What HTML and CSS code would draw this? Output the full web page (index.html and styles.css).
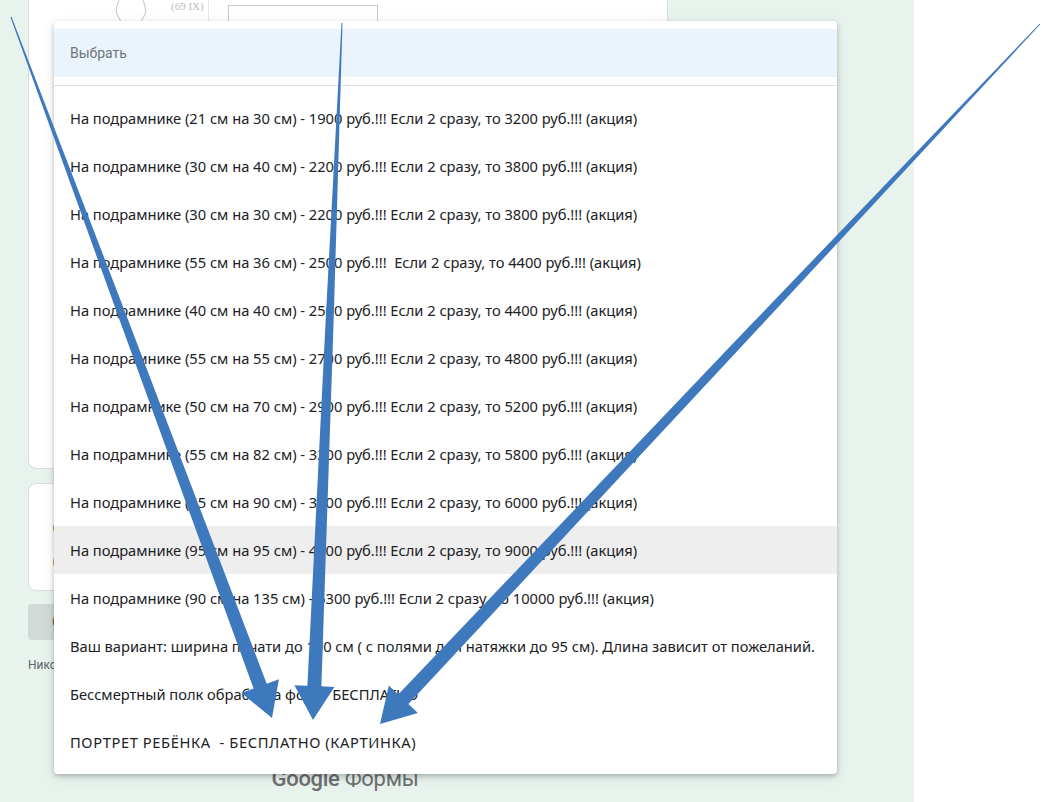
FILE: index.html
```html
<!DOCTYPE html>
<html lang="ru">
<head>
    <meta charset="UTF-8">
    <meta name="viewport" content="width=device-width, initial-scale=1.0">
    <title>Заказ портрета</title>
    <link rel="stylesheet" href="styles.css">
</head>
<body>
    <div class="page">
        <div class="form">
            <div class="card card-top">
                <div class="table-row">
                    <div class="cell cell-pic">
                        <svg class="sketch" width="40" height="22" viewBox="0 0 40 22">
                            <path d="M8 0 C6 6 4 10 6 14 C7 17 9 19 10 22 M32 0 C34 6 36 10 34 14 C33 17 31 19 30 22" fill="none" stroke="#cfcfcf" stroke-width="1.2"/>
                        </svg>
                        <span class="pic-label">(69 IX)</span>
                    </div>
                    <div class="cell cell-input">
                        <div class="fake-input"></div>
                    </div>
                </div>
            </div>

            <div class="card card-options">
                <div class="radio"></div>
                <div class="radio"></div>
            </div>

            <div class="actions">
                <button class="submit">Отправить</button>
            </div>

            <p class="notice">Никогда не используйте Google Формы для передачи паролей.</p>

            <div class="brand"><b>Google</b> Формы</div>
        </div>
    </div>

    <div class="dropdown">
        <div class="dropdown-head">Выбрать</div>
        <div class="dropdown-sep"></div>
        <div class="option">На подрамнике (21 см на 30 см) - 1900 руб.!!! Если 2 сразу, то 3200 руб.!!! (акция)</div>
        <div class="option">На подрамнике (30 см на 40 см) - 2200 руб.!!! Если 2 сразу, то 3800 руб.!!! (акция)</div>
        <div class="option">На подрамнике (30 см на 30 см) - 2200 руб.!!! Если 2 сразу, то 3800 руб.!!! (акция)</div>
        <div class="option">На подрамнике (55 см на 36 см) - 2500 руб.!!!&nbsp; Если 2 сразу, то 4400 руб.!!! (акция)</div>
        <div class="option">На подрамнике (40 см на 40 см) - 2500 руб.!!! Если 2 сразу, то 4400 руб.!!! (акция)</div>
        <div class="option">На подрамнике (55 см на 55 см) - 2700 руб.!!! Если 2 сразу, то 4800 руб.!!! (акция)</div>
        <div class="option">На подрамнике (50 см на 70 см) - 2900 руб.!!! Если 2 сразу, то 5200 руб.!!! (акция)</div>
        <div class="option">На подрамнике (55 см на 82 см) - 3200 руб.!!! Если 2 сразу, то 5800 руб.!!! (акция)</div>
        <div class="option">На подрамнике (65 см на 90 см) - 3300 руб.!!! Если 2 сразу, то 6000 руб.!!! (акция)</div>
        <div class="option hover">На подрамнике (95 см на 95 см) - 4800 руб.!!! Если 2 сразу, то 9000 руб.!!! (акция)</div>
        <div class="option">На подрамнике (90 см на 135 см) - 5300 руб.!!! Если 2 сразу, то 10000 руб.!!! (акция)</div>
        <div class="option">Ваш вариант: ширина печати до 100 см ( с полями для натяжки до 95 см). Длина зависит от пожеланий.</div>
        <div class="option">Бессмертный полк обработка фото - БЕСПЛАТНО</div>
        <div class="option caps">ПОРТРЕТ РЕБЁНКА&nbsp; - БЕСПЛАТНО (КАРТИНКА)</div>
    </div>

    <!-- arrows drawn on top of the screenshot -->
    <svg class="arrows" width="1042" height="802" viewBox="0 0 1042 802">
        <polygon points="11.5,16.8 126.9,316.7 266.7,683.7 278.9,679.2 272,718 241.4,693.1 253.6,688.6 119.4,319.5 10.5,17.2"/>
        <polygon points="342.5,23 333.6,321.5 321.4,686.3 334.4,686.9 313,720 294.4,685.2 307.4,685.7 325.6,321.2 341.5,23"/>
        <polygon points="1040.4,24.3 756.4,330.6 408.4,704.1 417.9,713 380,724 388.8,685.5 398.2,694.5 750.6,325.1 1039.6,23.7"/>
    </svg>
</body>
</html>
```

FILE: styles.css
```css
body {
    margin: 0;
    background: #fff;
    font-family: Roboto, Arial, sans-serif;
    overflow: hidden;
}
.page {
    width: 914px;
    height: 802px;
    background: #e8f3ee;
}
.form {
    margin-left: 28px;
    width: 640px;
}
.card {
    background: #fff;
    border: 1px solid #dadce0;
    border-radius: 8px;
    box-sizing: border-box;
}
.card-top {
    height: 469px;
    border-top: none;
    border-radius: 0 0 8px 8px;
}
.table-row {
    display: flex;
    height: 62px;
}
.cell {
    box-sizing: border-box;
}
.cell-pic {
    width: 180px;
    border-right: 1px solid #e6e6e6;
    display: flex;
    padding-left: 82px;
    gap: 20px;
}
.pic-label {
    font-family: "Liberation Serif", serif;
    font-size: 11px;
    line-height: 12px;
    color: #bdbdbd;
}
.cell-input {
    padding: 5px 0 0 19px;
}
.fake-input {
    width: 148px;
    height: 40px;
    border: 1px solid #c8c8c8;
}
.card-options {
    margin-top: 14px;
    height: 108px;
    padding: 34px 0 0 24px;
    display: flex;
    flex-direction: column;
    gap: 14px;
}
.radio {
    width: 16px;
    height: 16px;
    border: 2px solid #c9822b;
    border-radius: 50%;
}
.actions {
    margin-top: 13px;
}
.submit {
    background: #d1dad6;
    color: #8a5a2b;
    border: none;
    border-radius: 4px;
    height: 36px;
    padding: 0 24px;
    font-family: Roboto, Arial, sans-serif;
    font-size: 14px;
}
.notice {
    margin: 18px 0 0;
    font-size: 12px;
    color: #5f6368;
}
.brand {
    margin-top: 94px;
    margin-left: -6px;
    text-align: center;
    font-size: 22px;
    color: #6d6f72;
    letter-spacing: -0.3px;
}
.brand b {
    font-weight: 500;
}
.dropdown {
    position: absolute;
    left: 54px;
    top: 21px;
    width: 783px;
    background: #fff;
    border-radius: 4px;
    padding: 8px 0;
    box-shadow: 0 2px 4px rgba(0, 0, 0, 0.2), 0 3px 12px rgba(0, 0, 0, 0.12);
}
.dropdown-head {
    height: 48px;
    background: #ebf3fd;
    color: #70757a;
    font-size: 14px;
    padding-left: 16px;
    display: flex;
    align-items: center;
}
.dropdown-sep {
    height: 1px;
    background: #e0e0e0;
    margin: 8px 0;
}
.option {
    height: 48px;
    padding-left: 16px;
    display: flex;
    align-items: center;
    font-family: "Noto Sans", sans-serif;
    font-size: 14.7px;
    letter-spacing: -0.02px;
    color: #202124;
    white-space: nowrap;
}
.option.caps {
    letter-spacing: 0.6px;
}
.option.hover {
    background: #eeeeee;
}
.arrows {
    position: absolute;
    left: 0;
    top: 0;
    fill: #3f79bd;
}
```
